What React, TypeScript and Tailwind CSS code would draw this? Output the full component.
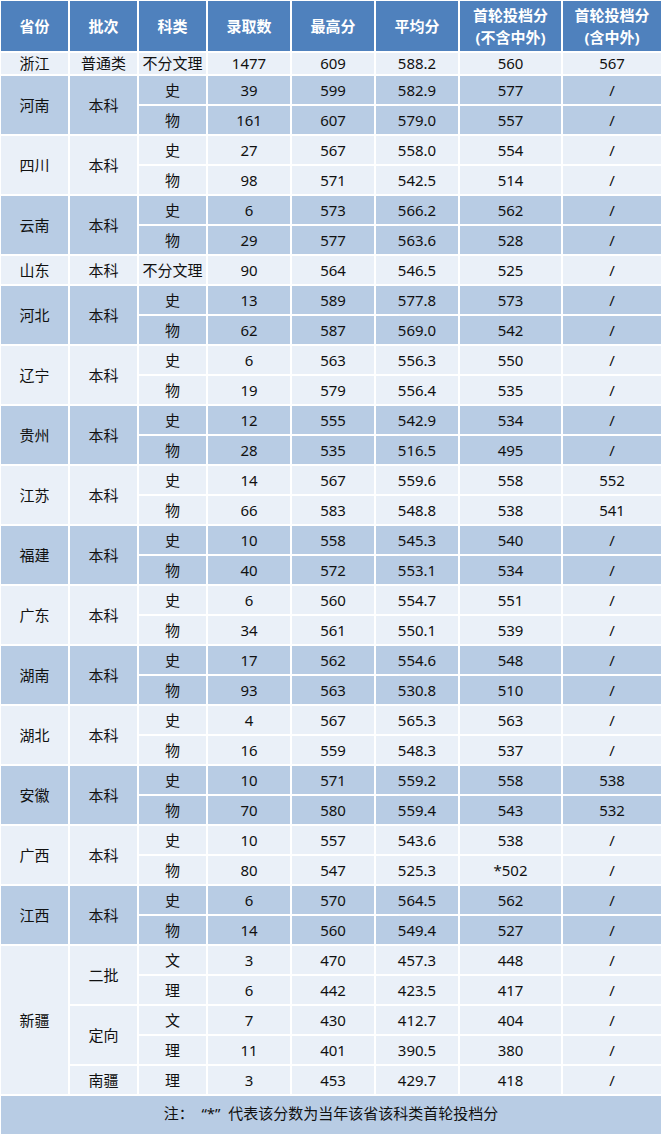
import React from "react";

type Row = {
  batch?: string;
  batchSpan?: number;
  subject: string;
  count: string;
  max: string;
  avg: string;
  first: string;
  firstAll: string;
};

type Group = {
  province: string;
  rows: Row[];
};

const groups: Group[] = [
  { province: "浙江", rows: [{ batch: "普通类", subject: "不分文理", count: "1477", max: "609", avg: "588.2", first: "560", firstAll: "567" }] },
  {
    province: "河南",
    rows: [
      { batch: "本科", batchSpan: 2, subject: "史", count: "39", max: "599", avg: "582.9", first: "577", firstAll: "/" },
      { subject: "物", count: "161", max: "607", avg: "579.0", first: "557", firstAll: "/" },
    ],
  },
  {
    province: "四川",
    rows: [
      { batch: "本科", batchSpan: 2, subject: "史", count: "27", max: "567", avg: "558.0", first: "554", firstAll: "/" },
      { subject: "物", count: "98", max: "571", avg: "542.5", first: "514", firstAll: "/" },
    ],
  },
  {
    province: "云南",
    rows: [
      { batch: "本科", batchSpan: 2, subject: "史", count: "6", max: "573", avg: "566.2", first: "562", firstAll: "/" },
      { subject: "物", count: "29", max: "577", avg: "563.6", first: "528", firstAll: "/" },
    ],
  },
  { province: "山东", rows: [{ batch: "本科", subject: "不分文理", count: "90", max: "564", avg: "546.5", first: "525", firstAll: "/" }] },
  {
    province: "河北",
    rows: [
      { batch: "本科", batchSpan: 2, subject: "史", count: "13", max: "589", avg: "577.8", first: "573", firstAll: "/" },
      { subject: "物", count: "62", max: "587", avg: "569.0", first: "542", firstAll: "/" },
    ],
  },
  {
    province: "辽宁",
    rows: [
      { batch: "本科", batchSpan: 2, subject: "史", count: "6", max: "563", avg: "556.3", first: "550", firstAll: "/" },
      { subject: "物", count: "19", max: "579", avg: "556.4", first: "535", firstAll: "/" },
    ],
  },
  {
    province: "贵州",
    rows: [
      { batch: "本科", batchSpan: 2, subject: "史", count: "12", max: "555", avg: "542.9", first: "534", firstAll: "/" },
      { subject: "物", count: "28", max: "535", avg: "516.5", first: "495", firstAll: "/" },
    ],
  },
  {
    province: "江苏",
    rows: [
      { batch: "本科", batchSpan: 2, subject: "史", count: "14", max: "567", avg: "559.6", first: "558", firstAll: "552" },
      { subject: "物", count: "66", max: "583", avg: "548.8", first: "538", firstAll: "541" },
    ],
  },
  {
    province: "福建",
    rows: [
      { batch: "本科", batchSpan: 2, subject: "史", count: "10", max: "558", avg: "545.3", first: "540", firstAll: "/" },
      { subject: "物", count: "40", max: "572", avg: "553.1", first: "534", firstAll: "/" },
    ],
  },
  {
    province: "广东",
    rows: [
      { batch: "本科", batchSpan: 2, subject: "史", count: "6", max: "560", avg: "554.7", first: "551", firstAll: "/" },
      { subject: "物", count: "34", max: "561", avg: "550.1", first: "539", firstAll: "/" },
    ],
  },
  {
    province: "湖南",
    rows: [
      { batch: "本科", batchSpan: 2, subject: "史", count: "17", max: "562", avg: "554.6", first: "548", firstAll: "/" },
      { subject: "物", count: "93", max: "563", avg: "530.8", first: "510", firstAll: "/" },
    ],
  },
  {
    province: "湖北",
    rows: [
      { batch: "本科", batchSpan: 2, subject: "史", count: "4", max: "567", avg: "565.3", first: "563", firstAll: "/" },
      { subject: "物", count: "16", max: "559", avg: "548.3", first: "537", firstAll: "/" },
    ],
  },
  {
    province: "安徽",
    rows: [
      { batch: "本科", batchSpan: 2, subject: "史", count: "10", max: "571", avg: "559.2", first: "558", firstAll: "538" },
      { subject: "物", count: "70", max: "580", avg: "559.4", first: "543", firstAll: "532" },
    ],
  },
  {
    province: "广西",
    rows: [
      { batch: "本科", batchSpan: 2, subject: "史", count: "10", max: "557", avg: "543.6", first: "538", firstAll: "/" },
      { subject: "物", count: "80", max: "547", avg: "525.3", first: "*502", firstAll: "/" },
    ],
  },
  {
    province: "江西",
    rows: [
      { batch: "本科", batchSpan: 2, subject: "史", count: "6", max: "570", avg: "564.5", first: "562", firstAll: "/" },
      { subject: "物", count: "14", max: "560", avg: "549.4", first: "527", firstAll: "/" },
    ],
  },
  {
    province: "新疆",
    rows: [
      { batch: "二批", batchSpan: 2, subject: "文", count: "3", max: "470", avg: "457.3", first: "448", firstAll: "/" },
      { subject: "理", count: "6", max: "442", avg: "423.5", first: "417", firstAll: "/" },
      { batch: "定向", batchSpan: 2, subject: "文", count: "7", max: "430", avg: "412.7", first: "404", firstAll: "/" },
      { subject: "理", count: "11", max: "401", avg: "390.5", first: "380", firstAll: "/" },
      { batch: "南疆", subject: "理", count: "3", max: "453", avg: "429.7", first: "418", firstAll: "/" },
    ],
  },
];

const headers = ["省份", "批次", "科类", "录取数", "最高分", "平均分", "首轮投档分\n(不含中外)", "首轮投档分\n(含中外)"];

export default function App() {
  return (
    <div className="w-[663px] bg-white">
      <table
        className="w-[664px] -mt-px -ml-px table-fixed border-separate border-spacing-[2px] text-[15px] text-[#111]"
        style={{ fontFamily: '"Noto Sans", "Noto Sans CJK SC", sans-serif' }}
      >
        <colgroup>
          <col className="w-[67px]" />
          <col className="w-[67px]" />
          <col className="w-[67px]" />
          <col className="w-[82px]" />
          <col className="w-[82px]" />
          <col className="w-[82px]" />
          <col className="w-[101px]" />
          <col />
        </colgroup>
        <thead>
          <tr className="h-[50px] bg-[#4f81bd] text-white">
            {headers.map((h) => (
              <th key={h} className="p-0 text-center align-middle font-bold leading-[22px] whitespace-pre-line">
                {h}
              </th>
            ))}
          </tr>
        </thead>
        <tbody>
          {groups.map((g, gi) => {
            const bg = gi % 2 === 0 ? "bg-[#eaf0f8]" : "bg-[#b8cce4]";
            return g.rows.map((r, ri) => (
              <tr key={g.province + ri} className={gi === 0 ? "h-[21px]" : "h-[28px]"}>
                {ri === 0 && (
                  <td rowSpan={g.rows.length} className={`${bg} p-0 text-center align-middle leading-none`}>
                    {g.province}
                  </td>
                )}
                {r.batch && (
                  <td rowSpan={r.batchSpan ?? 1} className={`${bg} p-0 text-center align-middle leading-none`}>
                    {r.batch}
                  </td>
                )}
                <td className={`${bg} p-0 text-center align-middle leading-none`}>{r.subject}</td>
                <td className={`${bg} p-0 text-center align-middle leading-none`}>{r.count}</td>
                <td className={`${bg} p-0 text-center align-middle leading-none`}>{r.max}</td>
                <td className={`${bg} p-0 text-center align-middle leading-none`}>{r.avg}</td>
                <td className={`${bg} p-0 text-center align-middle leading-none`}>{r.first}</td>
                <td className={`${bg} p-0 text-center align-middle leading-none`}>{r.firstAll}</td>
              </tr>
            ));
          })}
          <tr className="h-[38px]">
            <td colSpan={8} className="bg-[#b8cce4] p-0 pb-[3px] text-center align-middle">
              注：&nbsp;&nbsp;“*”&nbsp;&nbsp;代表该分数为当年该省该科类首轮投档分
            </td>
          </tr>
        </tbody>
      </table>
    </div>
  );
}
